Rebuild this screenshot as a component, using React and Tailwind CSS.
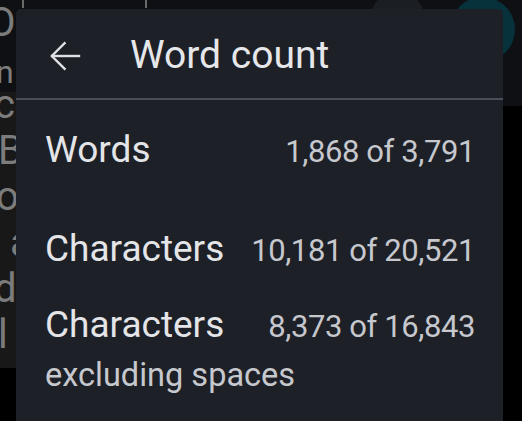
export default function App() {
  return (
    <div className="relative w-[522px] h-[421px] overflow-hidden bg-black font-['Roboto',sans-serif]">
      {/* document behind the dialog */}
      <div className="flex h-full">
        <div className="w-[16px] flex flex-col overflow-hidden text-[#7c7c7c]">
          <div className="h-[92px] bg-[#0f1013] flex flex-col">
            <div className="text-[40px] leading-[40px] mt-[3px] ml-[-12px]">O</div>
            <div className="text-[32px] leading-[32px] mt-[13px] ml-[-4px]">n</div>
          </div>
          <div className="h-[276px] bg-[#181818] flex flex-col text-[40px] leading-[46px] whitespace-nowrap">
            <div className="mt-[-10px] ml-[-6px]">c</div>
            <div className="ml-[-2px]">B</div>
            <div className="ml-[-4px]">o</div>
            <div className="ml-[10px]">a</div>
            <div className="ml-[-6px]">d</div>
            <div className="ml-[-2px]">l</div>
          </div>
        </div>
        <div className="flex-1 flex flex-col">
          <div className="h-[106px] bg-[#0f1013] flex items-start">
            <div className="ml-[6px] w-[2px] h-[8px] bg-[#6a6a6a]" />
            <div className="ml-[121px] w-[2px] h-[8px] bg-[#6a6a6a]" />
            <div className="ml-auto mt-[-8px] w-[55px] h-[55px] rounded-full bg-[#1b1e23]" />
            <div className="ml-[25px] mr-[7px] mt-[-3px] w-[65px] h-[65px] rounded-full bg-[#07323c]" />
          </div>
        </div>
      </div>

      {/* word count dialog */}
      <div className="absolute left-[16px] top-[9px] w-[487px] h-[430px] rounded-t-[5px] bg-[#1d2027] flex flex-col">
        <div className="h-[89px] pt-[4px] flex items-center">
          <svg
            className="ml-[25px] w-12 h-12 text-[#dfe0e3]"
            viewBox="0 0 24 24"
            fill="none"
            stroke="currentColor"
            strokeWidth="1.2"
            strokeLinecap="square"
          >
            <path d="M19 12H5.6" />
            <path d="M11.8 5.6L5.4 12l6.4 6.4" />
          </svg>
          <span className="ml-[41px] text-[39px] leading-[39px] text-[#e6e7ea]">Word count</span>
        </div>
        <div className="h-[2px] bg-[#4a4e56]" />

        <div className="flex flex-col px-[29px] pr-[28px]">
          <div className="mt-[32px] flex items-baseline justify-between">
            <span className="text-[37px] leading-[36px] text-[#e4e5e8]">Words</span>
            <span className="text-[31px] leading-[36px] tracking-[-0.4px] text-[#c6c8cd]">1,868 of 3,791</span>
          </div>
          <div className="mt-[61px] flex items-baseline justify-between">
            <span className="text-[37px] leading-[36px] text-[#e4e5e8]">Characters</span>
            <span className="text-[31px] leading-[36px] tracking-[-0.4px] text-[#c6c8cd]">10,181 of 20,521</span>
          </div>
          <div className="mt-[38px] flex items-baseline justify-between">
            <span className="text-[37px] leading-[36px] text-[#e4e5e8]">Characters</span>
            <span className="text-[31px] leading-[36px] tracking-[-0.4px] text-[#c6c8cd]">8,373 of 16,843</span>
          </div>
          <div className="mt-[14px] text-[32.5px] leading-[32px] text-[#c6c8cd]">excluding spaces</div>
        </div>
      </div>
    </div>
  );
}
